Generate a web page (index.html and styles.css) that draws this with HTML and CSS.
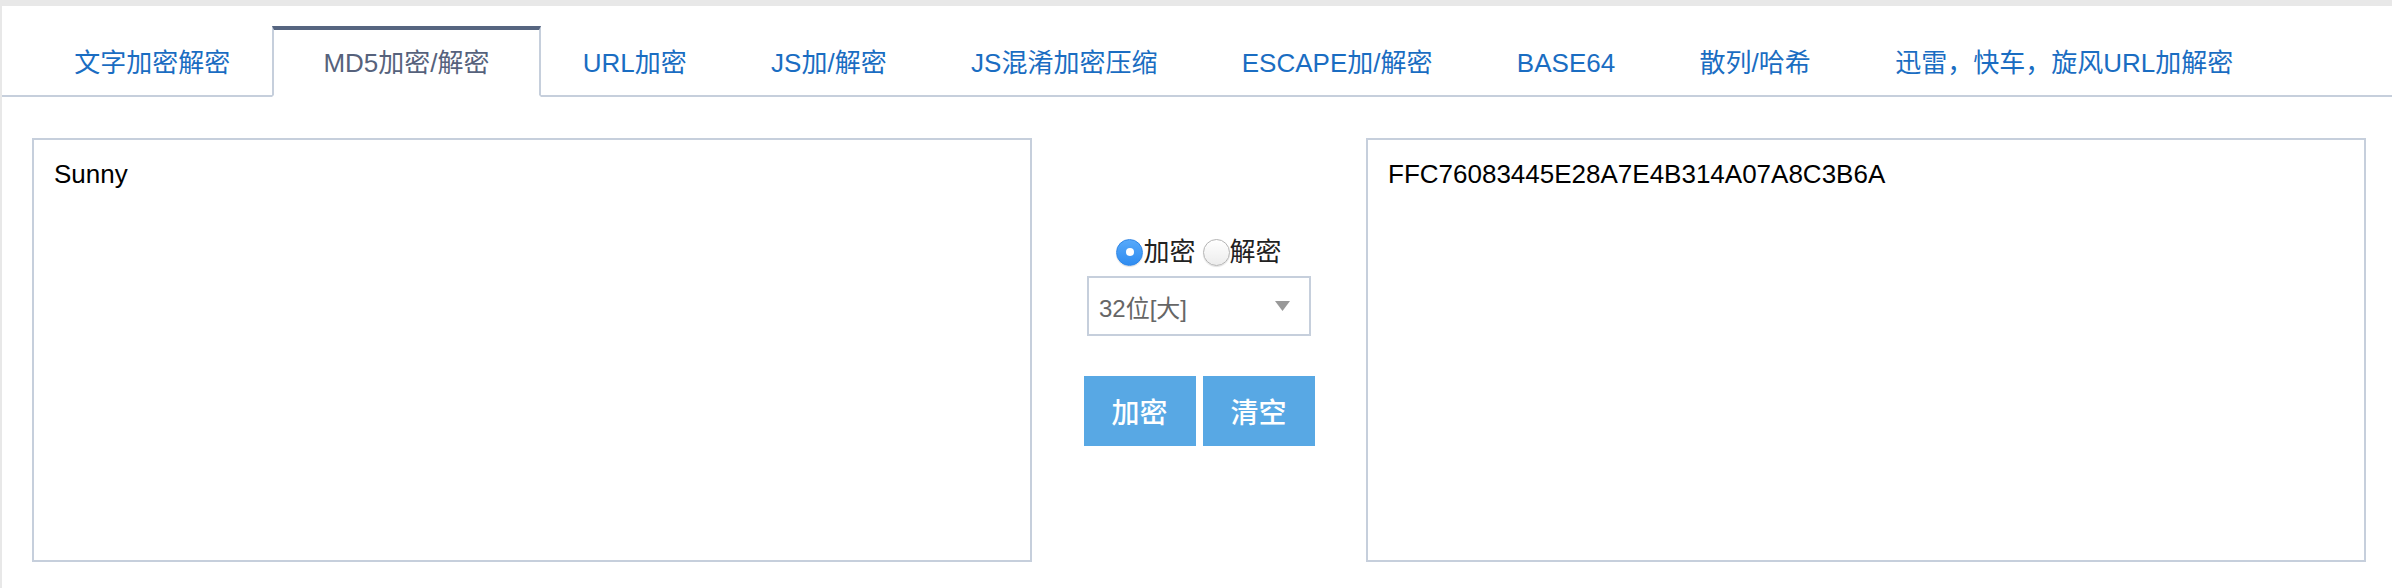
FILE: index.html
```html
<!DOCTYPE html>
<html lang="zh-CN">
<head>
<meta charset="utf-8">
<title>MD5加密/解密</title>
<link rel="stylesheet" href="styles.css">
</head>
<body>
<div class="page">
  <ul class="tabs">
    <li class="tab">文字加密解密</li>
    <li class="tab active">MD5加密/解密</li>
    <li class="tab">URL加密</li>
    <li class="tab">JS加/解密</li>
    <li class="tab">JS混淆加密压缩</li>
    <li class="tab">ESCAPE加/解密</li>
    <li class="tab">BASE64</li>
    <li class="tab">散列/哈希</li>
    <li class="tab">迅雷，快车，旋风URL加解密</li>
  </ul>
  <div class="content">
    <textarea class="field">Sunny</textarea>
    <div class="middle">
      <div class="radios">
        <label class="radio-label"><span class="radio checked"></span>加密</label>
        <span class="space"></span>
        <label class="radio-label"><span class="radio"></span>解密</label>
      </div>
      <div class="select">
        <span class="select-text">32位[大]</span>
        <svg class="select-arrow" width="15" height="10" viewBox="0 0 15 10"><path d="M0 0 H15 L7.5 10 Z" fill="#999"/></svg>
      </div>
      <div class="buttons">
        <button class="btn">加密</button>
        <button class="btn">清空</button>
      </div>
    </div>
    <textarea class="field">FFC76083445E28A7E4B314A07A8C3B6A</textarea>
  </div>
</div>
</body>
</html>
```
FILE: styles.css
```css
html, body {
  margin: 0;
  padding: 0;
}
body {
  background: #e8e8e8;
  font-family: "Liberation Sans", "Noto Sans CJK SC", sans-serif;
  overflow: hidden;
}
.page {
  margin: 6px 0 0 2px;
  height: 582px;
  background: #fff;
}
.tabs {
  display: flex;
  list-style: none;
  margin: 0;
  padding: 20px 0 0 30px;
  border-bottom: 2px solid #c6cfdc;
}
.tab {
  height: 65px;
  display: flex;
  align-items: center;
  padding: 0 40.2px;
  border: 2px solid transparent;
  border-top-width: 4px;
  margin-bottom: -2px;
  font-size: 26px;
  line-height: 30px;
  color: #1a6dc2;
  white-space: nowrap;
}
.tab.active {
  padding: 0 49px;
  border-color: #c6cfdc;
  border-top-color: #566580;
  border-bottom-color: #fff;
  background: #fff;
  color: #56627c;
}
.content {
  display: flex;
  padding: 41px 26px 0 30px;
}
.field {
  width: 1000px;
  height: 424px;
  box-sizing: border-box;
  margin: 0;
  border: 2px solid #c6cfdc;
  padding: 19px 20px;
  font-family: "Liberation Sans", "Noto Sans CJK SC", sans-serif;
  font-size: 26px;
  line-height: 30px;
  color: #000;
  resize: none;
  outline: none;
  background: #fff;
}
.middle {
  flex: 1;
  display: flex;
  flex-direction: column;
  align-items: center;
  padding-top: 100px;
}
.radios {
  display: flex;
  align-items: center;
  height: 28px;
  font-size: 26px;
  line-height: 28px;
  color: #222;
}
.radio-label {
  display: flex;
  align-items: center;
}
.space {
  width: 7px;
}
.radio {
  width: 27px;
  height: 27px;
  box-sizing: border-box;
  border-radius: 50%;
  border: 1px solid #b4b4b4;
  background: linear-gradient(#ffffff, #ececec);
  box-shadow: 0 1px 1px rgba(0,0,0,0.12);
  display: flex;
  align-items: center;
  justify-content: center;
}
.radio.checked {
  border-color: #2f86e6;
  background: linear-gradient(#57a9fa, #2f8cf0);
}
.radio.checked::after {
  content: "";
  width: 8px;
  height: 8px;
  border-radius: 50%;
  background: #fff;
}
.select {
  margin-top: 10px;
  width: 224px;
  height: 60px;
  box-sizing: border-box;
  border: 2px solid #c6cfdc;
  padding: 0 19px 0 10px;
  display: flex;
  align-items: center;
  justify-content: space-between;
  font-size: 24px;
  color: #666;
}
.select-arrow {
  display: block;
}
.buttons {
  margin-top: 40px;
  display: flex;
  gap: 7px;
}
.btn {
  width: 112px;
  height: 70px;
  border: none;
  margin: 0;
  padding: 0;
  background: #58a8e4;
  color: #fff;
  font-family: "Liberation Sans", "Noto Sans CJK SC", sans-serif;
  font-size: 28px;
  font-weight: 500;
}
```
